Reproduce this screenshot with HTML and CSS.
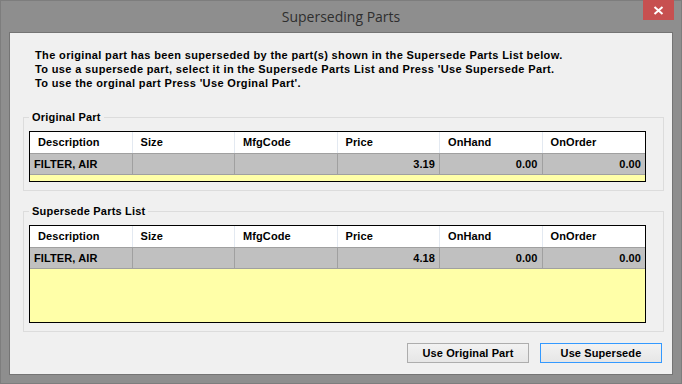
FILE: index.html
```html
<!DOCTYPE html>
<html>
<head>
<meta charset="utf-8">
<link rel="stylesheet" href="styles.css">
</head>
<body>
<div class="window">
  <div class="titlebar">
    <span></span>
    <div class="title">Superseding Parts</div>
    <button class="close" aria-label="Close">
      <svg width="11" height="9" viewBox="0 0 11 9"><path d="M1.5 1 L9.5 8 M9.5 1 L1.5 8" stroke="#fff" stroke-width="2" fill="none"/></svg>
    </button>
  </div>
  <div class="client">
    <p class="intro">The original part has been superseded by the part(s) shown in the Supersede Parts List below.<br>To use a supersede part, select it in the Supersede Parts List and Press 'Use Supersede Part.<br>To use the orginal part Press 'Use Orginal Part'.</p>

    <fieldset class="group">
      <legend>Original Part</legend>
      <div class="grid">
        <div class="row head">
          <div class="cell">Description</div><div class="cell">Size</div><div class="cell">MfgCode</div><div class="cell">Price</div><div class="cell">OnHand</div><div class="cell">OnOrder</div>
        </div>
        <div class="row data">
          <div class="cell">FILTER, AIR</div><div class="cell"></div><div class="cell"></div><div class="cell num">3.19</div><div class="cell num">0.00</div><div class="cell num">0.00</div>
        </div>
        <div class="filler short"></div>
      </div>
    </fieldset>

    <fieldset class="group second">
      <legend>Supersede Parts List</legend>
      <div class="grid">
        <div class="row head">
          <div class="cell">Description</div><div class="cell">Size</div><div class="cell">MfgCode</div><div class="cell">Price</div><div class="cell">OnHand</div><div class="cell">OnOrder</div>
        </div>
        <div class="row data">
          <div class="cell">FILTER, AIR</div><div class="cell"></div><div class="cell"></div><div class="cell num">4.18</div><div class="cell num">0.00</div><div class="cell num">0.00</div>
        </div>
        <div class="filler tall"></div>
      </div>
    </fieldset>

    <div class="actions">
      <button class="btn">Use Original Part</button>
      <button class="btn default">Use Supersede</button>
    </div>
  </div>
</div>
</body>
</html>
```

FILE: styles.css
```css
html, body {
  margin: 0;
  padding: 0;
  background: #8e8e8e;
}

.window {
  width: 682px;
  height: 384px;
  box-sizing: border-box;
  border: 1px solid #7d7d7d;
  background: #8e8e8e;
  padding: 0 8px 8px;
  display: flex;
  flex-direction: column;
}

.titlebar {
  height: 31px;
  flex: none;
  display: grid;
  grid-template-columns: 1fr auto 1fr;
  align-items: start;
}

.title {
  font-family: "Open Sans", "Noto Sans", sans-serif;
  font-size: 14px;
  color: #2e2e2e;
  line-height: 31px;
}

.close {
  justify-self: end;
  width: 31px;
  height: 20px;
  margin-top: -1px;
  margin-right: -1px;
  padding: 0;
  border: 0;
  background: #c75050;
  display: flex;
  align-items: center;
  justify-content: center;
}

.close svg {
  display: block;
}

.client {
  flex: 1;
  background: #f0f0f0;
  border: 1px solid #747474;
  padding: 15px 8px 0 13px;
  display: flex;
  flex-direction: column;
  font-family: "Liberation Sans", Arial, sans-serif;
  font-size: 11px;
  font-weight: bold;
  color: #000;
}

.intro {
  margin: 0 0 0 12px;
  line-height: 14px;
  letter-spacing: 0.36px;
}

.group {
  margin: 20px 0 0 0;
  padding: 7px 0 8px 5px;
  border: 1px solid #dcdcdc;
  min-width: 0;
}

.group.second {
  margin-top: 13px;
}

.group legend {
  padding: 0 3px;
  line-height: 14px;
  letter-spacing: 0.2px;
}

.grid {
  width: 615px;
  border: 1px solid #000;
  background: #ffffa8;
}

.row {
  display: grid;
  grid-template-columns: repeat(6, 1fr);
}

.head {
  background: #fff;
  height: 21px;
}

.head .cell {
  border-right: 1px solid #e3e9f1;
  padding-left: 8px;
  line-height: 21px;
  letter-spacing: 0.1px;
}

.data {
  background: #c0c0c0;
  height: 22px;
  border-top: 1px solid #a0a0a0;
  border-bottom: 1px solid #a0a0a0;
  box-sizing: border-box;
}

.data .cell {
  border-right: 1px solid #a0a0a0;
  padding: 0 4px 0 4px;
  line-height: 20px;
  letter-spacing: 0.1px;
}

.cell:last-child {
  border-right: 0;
}

.cell.num {
  text-align: right;
}

.filler.short {
  height: 6px;
}

.filler.tall {
  height: 53px;
}

.actions {
  display: flex;
  justify-content: flex-end;
  gap: 11px;
  margin-top: 11px;
  padding-right: 2px;
}

.btn {
  width: 122px;
  height: 20px;
  box-sizing: border-box;
  border: 1px solid #adadad;
  background: linear-gradient(#f2f2f2, #e6e6e6);
  font-family: "Liberation Sans", Arial, sans-serif;
  font-size: 11px;
  font-weight: bold;
  letter-spacing: 0.1px;
  color: #000;
  padding: 0;
}

.btn.default {
  border-color: #3399ff;
}
```
